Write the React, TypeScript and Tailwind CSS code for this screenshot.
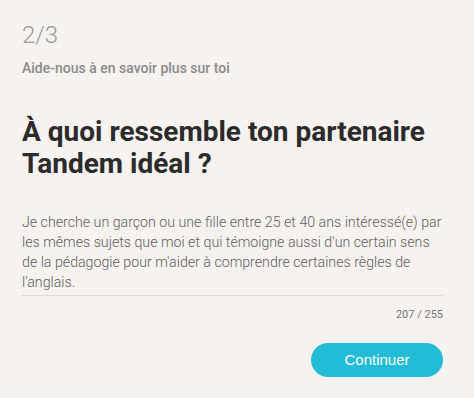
export default function App() {
  return (
    <div className="min-h-[398px] w-full bg-[#f5f2ef] px-[22px] pt-[21px] font-['Roboto',sans-serif]">
      <div className="w-[421px]">
        <div className="text-[24px] font-light leading-[28px] text-[#9a9a9a]">2/3</div>
        <div className="mt-[11px] text-[14px] font-medium leading-[16px] text-[#8c8c8c]">Aide-nous à en savoir plus sur toi</div>
        <h1 className="mt-[40px] text-[28px] font-bold leading-[32px] text-[#2b2b2b]">
          À quoi ressemble ton partenaire
          <br />
          Tandem idéal ?
        </h1>
        <div className="mt-[32px] border-b border-[#dedad6] pb-[3px]">
          <p className="whitespace-nowrap text-[14.2px] font-light leading-[20px] text-[#5f5f5f]">
            Je cherche un garçon ou une fille entre 25 et 40 ans intéressé(e) par
            <br />
            les mêmes sujets que moi et qui témoigne aussi d'un certain sens
            <br />
            de la pédagogie pour m'aider à comprendre certaines règles de
            <br />
            l'anglais.
          </p>
        </div>
        <div className="mt-[12px] text-right text-[11px] leading-[14px] text-[#777]">207 / 255</div>
        <div className="mt-[21px] flex justify-end">
          <button className="h-[34px] w-[132px] rounded-full bg-[#22bcd6] font-['Liberation_Sans',Arial,sans-serif] text-[15px] text-white">
            Continuer
          </button>
        </div>
      </div>
    </div>
  );
}
